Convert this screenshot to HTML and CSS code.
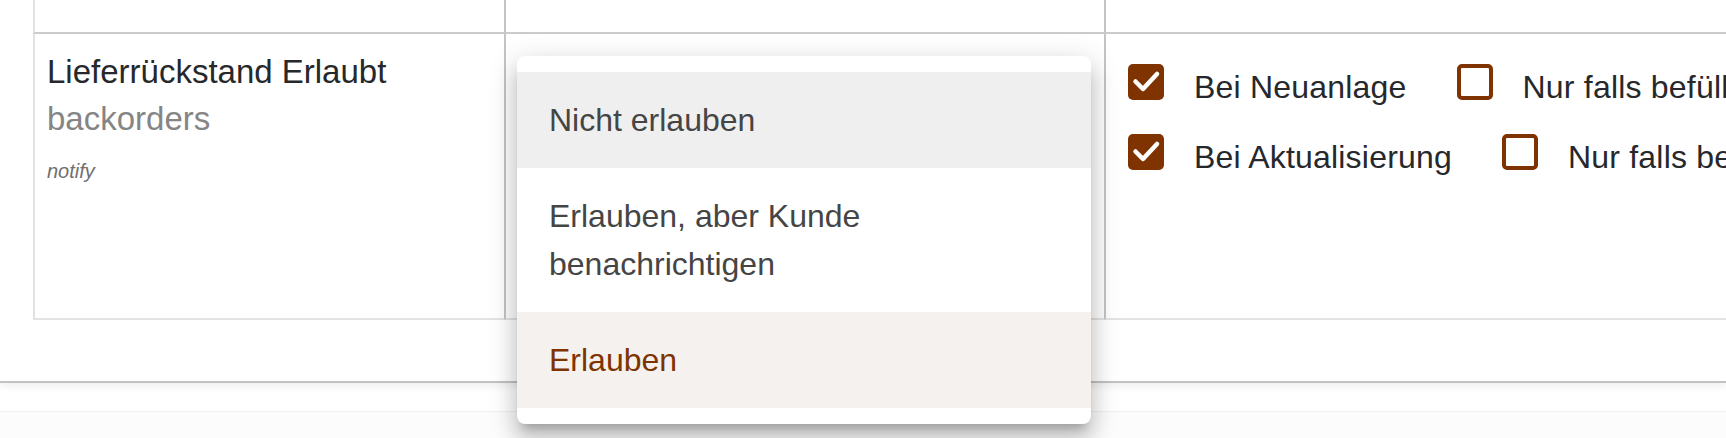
FILE: index.html
```html
<!DOCTYPE html>
<html lang="de">
<head>
<meta charset="utf-8">
<title>Lieferrückstand</title>
<link rel="stylesheet" href="styles.css">
</head>
<body>
<div class="page">
  <section class="card">
    <div class="table">
      <div class="cell cell-first cell-top"></div>
      <div class="cell cell-mid cell-top"></div>
      <div class="cell cell-last cell-top"></div>

      <div class="cell cell-first cell-row">
        <div class="field-label">Lieferrückstand Erlaubt</div>
        <div class="field-code">backorders</div>
        <div class="field-default">notify</div>
      </div>
      <div class="cell cell-mid cell-row"></div>
      <div class="cell cell-last cell-row">
        <div class="check-row">
          <span class="box box-on"><svg viewBox="0 0 36 36" width="36" height="36"><path d="M7.5 17.5 L15 25 L29 10" fill="none" stroke="#fff" stroke-width="4.5" stroke-linecap="round" stroke-linejoin="round"/></svg></span>
          <span class="check-text">Bei Neuanlage</span>
          <span class="box box-off"></span>
          <span class="check-text">Nur falls befüllt</span>
        </div>
        <div class="check-row">
          <span class="box box-on"><svg viewBox="0 0 36 36" width="36" height="36"><path d="M7.5 17.5 L15 25 L29 10" fill="none" stroke="#fff" stroke-width="4.5" stroke-linecap="round" stroke-linejoin="round"/></svg></span>
          <span class="check-text">Bei Aktualisierung</span>
          <span class="box box-off"></span>
          <span class="check-text">Nur falls befüllt</span>
        </div>
      </div>
    </div>
  </section>
  <div class="footer-strip"></div>

  <ul class="menu">
    <li class="menu-item menu-hover">Nicht erlauben</li>
    <li class="menu-item">Erlauben, aber Kunde<br>benachrichtigen</li>
    <li class="menu-item menu-selected">Erlauben</li>
  </ul>
</div>
</body>
</html>
```

FILE: styles.css
```css
* {
  box-sizing: border-box;
}

html,
body {
  margin: 0;
  padding: 0;
  overflow: hidden;
  background: #ffffff;
}

body {
  font-family: "Liberation Sans", Arial, Helvetica, sans-serif;
  color: #2b2b2b;
  width: 1726px;
  height: 438px;
}

.page {
  position: relative;
  width: 1726px;
  height: 438px;
}

.card {
  height: 383px;
  background: #ffffff;
  border-bottom: 2px solid #c2c2c2;
  box-shadow: 0 3px 8px rgba(0, 0, 0, 0.07);
  padding-left: 33px;
  overflow: hidden;
  position: relative;
  z-index: 1;
}

.table {
  display: grid;
  grid-template-columns: 471px 600px 1000px;
  grid-template-rows: 34px 286px;
  width: 2071px;
}

.cell {
  border-left: 2px solid #c4c4c4;
}

.cell-first {
  border-left: 2px solid #e2e2e2;
}

.cell-top {
  border-bottom: 2px solid #cbcbcb;
}

.cell-row {
  border-bottom: 2px solid #e3e3e3;
}

.cell-first.cell-row {
  padding: 18px 12px 0 12px;
}

.field-label {
  font-size: 33px;
  line-height: 40px;
  color: #26282b;
  white-space: nowrap;
}

.field-code {
  margin-top: 3px;
  font-size: 33px;
  line-height: 48px;
  color: #858585;
}

.field-default {
  margin-top: 16px;
  font-size: 20px;
  line-height: 24px;
  font-style: italic;
  color: #6f6f6f;
}

.cell-last.cell-row {
  padding: 30px 0 0 22px;
  display: flex;
  flex-direction: column;
  gap: 34px;
}

.check-row {
  display: flex;
  align-items: flex-start;
  height: 36px;
  white-space: nowrap;
}

.box {
  flex: none;
  width: 36px;
  height: 36px;
  border-radius: 5px;
  display: block;
}

.box svg {
  display: block;
}

.box-on {
  background: #7f3300;
}

.box-off {
  border: 4px solid #7f3300;
  background: #ffffff;
}

.check-text {
  font-size: 32px;
  line-height: 36px;
  padding-top: 5px;
  color: #26282b;
  margin-left: 30px;
  margin-right: 50px;
  letter-spacing: 0.2px;
}

.footer-strip {
  margin-top: 28px;
  height: 27px;
  border-top: 1px solid #f1f1f1;
  background: #fcfcfc;
}

.menu {
  position: absolute;
  left: 517px;
  top: 56px;
  width: 574px;
  margin: 0;
  padding: 16px 0;
  list-style: none;
  background: #ffffff;
  border-radius: 8px;
  z-index: 5;
  box-shadow:
    0 10px 10px -6px rgba(0, 0, 0, 0.2),
    0 16px 20px 2px rgba(0, 0, 0, 0.14),
    0 6px 28px 4px rgba(0, 0, 0, 0.12);
}

.menu-item {
  padding: 24px 32px;
  font-size: 32px;
  line-height: 48px;
  color: #454545;
}

.menu-hover {
  background: #efefef;
}

.menu-selected {
  background: #f5f1ee;
  color: #7f3300;
}
```
